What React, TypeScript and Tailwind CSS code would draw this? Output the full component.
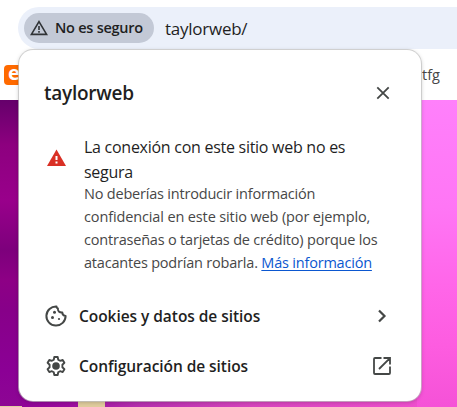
import React from "react";

const ui = "font-['Open_Sans','Noto_Sans',sans-serif]";

function WarningOutline() {
  return (
    <svg width="18" height="16" viewBox="0 0 18 16" fill="none" className="block shrink-0">
      <path d="M9 1.6 16.6 14.4H1.4Z" stroke="#303336" strokeWidth="1.6" />
      <path d="M9 6v4M9 11v1.7" stroke="#303336" strokeWidth="1.6" />
    </svg>
  );
}

function WarningFilled() {
  return (
    <svg width="20" height="18" viewBox="0 0 20 18" className="block">
      <path d="M9.500 0.500 19 17H0Z" fill="#d93025" />
      <path d="M8.500 7h2v4h-2zM8.500 12.500h2v2h-2z" fill="#fff" />
    </svg>
  );
}

function CookieIcon() {
  return (
    <svg width="22" height="22" viewBox="0 0 22 22" fill="none" className="block">
      <path
        d="M11.500 1.400A9.600 9.600 0 1 0 20.600 11c-2.100-.2-3.300-1.400-3.300-3.400-3 .1-4.800-1.500-4.400-4.100C12 3.100 11.500 2.400 11.500 1.400Z"
        stroke="#444746"
        strokeWidth="2"
        strokeLinejoin="round"
      />
      <circle cx="9.500" cy="7.200" r="1.500" fill="#444746" />
      <circle cx="7.500" cy="12.500" r="1.500" fill="#444746" />
      <circle cx="14" cy="14" r="1.100" fill="#444746" />
    </svg>
  );
}

function GearIcon() {
  return (
    <svg width="22" height="22" viewBox="0 0 22 22" fill="none" className="block">
      <path
        d="M9.300 2h3.400l.5 2.700 1.900 1.100 2.600-.9 1.700 2.900-2 1.900v2.600l2 1.900-1.700 2.900-2.600-.9-1.900 1.100-.5 2.700H9.300l-.5-2.700-1.900-1.100-2.600.9-1.700-2.900 2-1.900V9.700l-2-1.900 1.700-2.900 2.600.9 1.900-1.100Z"
        stroke="#444746"
        strokeWidth="1.9"
        strokeLinejoin="round"
      />
      <circle cx="11" cy="11" r="3.800" fill="#444746" />
    </svg>
  );
}

function CloseIcon() {
  return (
    <svg width="14" height="14" viewBox="0 0 14 14" className="block">
      <path d="m1.300 1.300 11.400 11.400M12.700 1.300 1.300 12.700" stroke="#444746" strokeWidth="1.800" />
    </svg>
  );
}

function ChevronIcon() {
  return (
    <svg width="10" height="14" viewBox="0 0 10 14" fill="none" className="block">
      <path d="m2 1.500 5.500 5.500L2 12.500" stroke="#444746" strokeWidth="2.200" />
    </svg>
  );
}

function LaunchIcon() {
  return (
    <svg width="20" height="20" viewBox="0 0 20 20" fill="none" className="block">
      <path
        d="M9.500 2H3a1 1 0 0 0-1 1v14a1 1 0 0 0 1 1h14a1 1 0 0 0 1-1v-6.500M11.500 2H18v6.500M17.700 2.300 7 13"
        stroke="#444746"
        strokeWidth="1.800"
      />
    </svg>
  );
}

function AddressBar() {
  return (
    <div className="ml-[18px] flex h-[42px] items-center rounded-l-full bg-[#ebf0fa] pl-[6px]">
      <div className="mb-px flex h-[30px] w-[130px] items-center rounded-full bg-[#c3c9d6] pl-[6px]">
        <WarningOutline />
        <span className="ml-[7px] whitespace-nowrap text-[14.5px] font-semibold tracking-[-0.25px] text-[#1f1f1f]">No es seguro</span>
      </div>
      <span className="ml-[11px] whitespace-nowrap pt-px text-[17px] tracking-[-0.25px] text-[#1f1f1f]">taylorweb/</span>
    </div>
  );
}

function Bookmarks() {
  return (
    <div className="flex h-[51px] items-center justify-between pr-[17px] pl-[4px]">
      <span className="flex h-[20px] w-[20px] items-center justify-center rounded-[4px] bg-[#ff6a00] pb-[3px] text-[20px] leading-none font-bold text-white">e</span>
      <span className="text-[14.5px] text-[#474747]">tfg</span>
    </div>
  );
}

function Row({ icon, label, end }: { icon: React.ReactNode; label: React.ReactNode; end: React.ReactNode }) {
  return (
    <div className="flex h-[50px] items-center pl-[26px]">
      {icon}
      <span className="ml-[12px] flex-1 whitespace-nowrap pt-[2px] text-[15.5px] font-semibold text-[#1f1f1f]">{label}</span>
      <span className="mr-[29px] flex w-[20px] justify-center">{end}</span>
    </div>
  );
}

function SiteInfo() {
  return (
    <div className="absolute top-[50px] left-[19px] h-[351px] w-[402px] rounded-[14px] bg-white shadow-[0_0_0_1px_rgba(195,195,195,0.7),0_1px_4px_rgba(0,0,0,0.25)]">
      <div className="flex h-[85px] items-center justify-between pr-[31px] pl-[25px]">
        <h1 className="whitespace-nowrap pt-[2px] text-[19px] font-semibold text-[#1f1f1f]"><span className="tracking-[-0.25px]">taylorweb</span></h1>
        <CloseIcon />
      </div>
      <div className="flex h-[156px] pl-[28px]">
        <div className="pt-[14px]"><WarningFilled /></div>
        <div className="ml-[17px] whitespace-nowrap">
          <div className="text-[16px] leading-[25px] text-[#1f1f1f]">
            <p className="tracking-[-0.27px]">La conexión con este sitio web no es</p>
            <p className="tracking-[-0.3px]">segura</p>
          </div>
          <div className="-mt-[3px] text-[14.5px] leading-[23px] text-[#474747]">
            <p className="tracking-[-0.2px]">No deberías introducir información</p>
            <p className="tracking-[-0.13px]">confidencial en este sitio web (por ejemplo,</p>
            <p className="tracking-[-0.2px]">contraseñas o tarjetas de crédito) porque los</p>
            <p className="tracking-[-0.2px]">
              atacantes podrían robarla. <a className="text-[#0b57d0] underline underline-offset-2">Más información</a>
            </p>
          </div>
        </div>
      </div>
      <Row icon={<CookieIcon />} label={<span className="tracking-[-0.05px]">Cookies y datos de sitios</span>} end={<ChevronIcon />} />
      <Row icon={<GearIcon />} label={<span className="tracking-[-0.06px]">Configuración de sitios</span>} end={<LaunchIcon />} />
    </div>
  );
}

export default function App() {
  return (
    <div className={`relative h-[407px] w-[457px] overflow-hidden bg-white pt-[7px] ${ui}`}>
      <AddressBar />
      <Bookmarks />
      <div className="flex h-[307px] bg-[linear-gradient(90deg,#8b0094_0%,#9b0b9e_15%,#b52fae_30%,#d645bd_55%,#f452d2_100%)]">
        <div className="flex w-[22px] flex-col justify-end bg-[linear-gradient(180deg,#65006b_0px,#8d007f_45px,#99008b_100px,#7d007c_150px,#8d0085_180px,#870089_210px,#8b0095_270px,#8d0694_307px)]">
          <div className="h-px bg-[#e0cda0]" />
        </div>
        <div className="flex flex-1 flex-col justify-end pl-[56px]">
          <div className="h-[6px] w-[27px] bg-[#dfcc9c]" />
        </div>
        <div className="w-[40px] bg-[linear-gradient(180deg,#ff80fb_0%,#ff76f5_35%,#ff66e9_60%,#fd5ce0_80%,#f552d7_100%)]" />
      </div>
      <SiteInfo />
    </div>
  );
}
